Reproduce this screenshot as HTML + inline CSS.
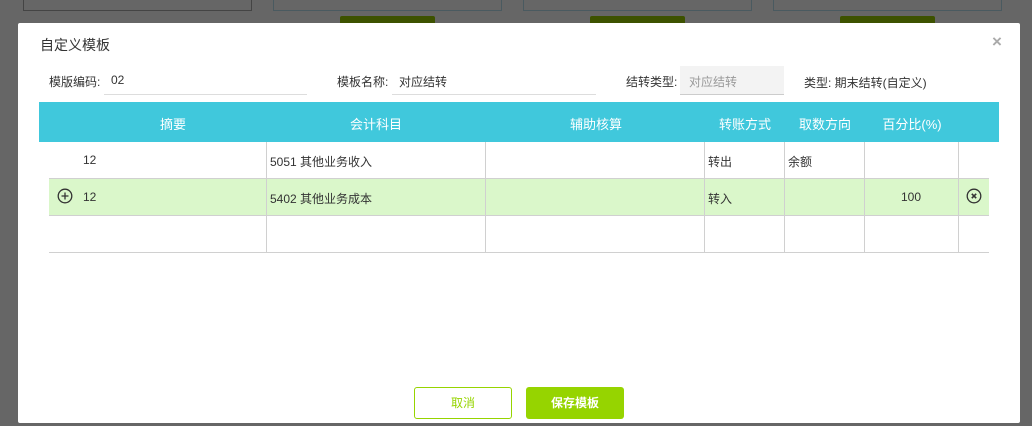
<!DOCTYPE html>
<html><head><meta charset="utf-8"><style>
*{margin:0;padding:0;box-sizing:border-box}
body{width:1032px;height:426px;background:#666;position:relative;overflow:hidden;font-family:"Liberation Sans","Noto Sans CJK SC",sans-serif;font-size:12px;color:#333}
.a{position:absolute}
.bg{border:1px solid #4a5a60;border-top:none;height:11px;top:0}
.gb{background:#3d5200;height:10px;top:16px;width:95px;border-radius:2px 2px 0 0}
.m{left:18px;top:23px;width:1002px;height:400px;background:#fff;border-radius:2px}
.hd{left:39px;top:102px;width:960px;height:40px;background:#40c8dc;color:#fff;font-size:13px}
.hd span{position:absolute;top:12px;transform:translateX(-50%);white-space:nowrap}
.hl{height:1px;background:#d0d0d0;left:49px;width:940px}
.vl{width:1px;background:#d0d0d0;top:142px;height:111px}
.t{white-space:nowrap}
.inp{height:1px;background:#ddd}
</style></head><body>
<div class="a bg" style="left:23px;width:229px;border-color:#444"></div>
<div class="a bg" style="left:273px;width:229px"></div>
<div class="a bg" style="left:523px;width:229px"></div>
<div class="a bg" style="left:773px;width:229px"></div>
<div class="a gb" style="left:340px"></div>
<div class="a gb" style="left:590px"></div>
<div class="a gb" style="left:840px"></div>
<div class="a m"></div>
<div class="a t" style="left:40px;top:35px;font-size:14px;color:#333">自定义模板</div>
<div class="a t" style="left:992px;top:32px;font-size:17px;color:#aaa;font-weight:bold">×</div>
<div class="a t" style="left:49px;top:73px">模版编码:</div>
<div class="a t" style="left:111px;top:73px">02</div>
<div class="a inp" style="left:104px;top:94px;width:203px"></div>
<div class="a t" style="left:337px;top:73px">模板名称:</div>
<div class="a t" style="left:399px;top:73px">对应结转</div>
<div class="a inp" style="left:392px;top:94px;width:204px"></div>
<div class="a t" style="left:626px;top:73px">结转类型:</div>
<div class="a" style="left:680px;top:66px;width:104px;height:29px;background:#f3f3f3;border-bottom:1px solid #ccc"></div>
<div class="a t" style="left:689px;top:73px;color:#999">对应结转</div>
<div class="a t" style="left:804px;top:74px">类型: 期末结转(自定义)</div>
<div class="a hd"><span style="left:134px">摘要</span><span style="left:337px">会计科目</span><span style="left:557px">辅助核算</span><span style="left:706px">转账方式</span><span style="left:786px">取数方向</span><span style="left:873px">百分比(%)</span></div>
<div class="a" style="left:49px;top:179px;width:940px;height:37px;background:#daf7ca"></div>
<div class="a hl" style="top:178px"></div>
<div class="a hl" style="top:215px"></div>
<div class="a hl" style="top:252px"></div>
<div class="a vl" style="left:266px"></div>
<div class="a vl" style="left:485px"></div>
<div class="a vl" style="left:704px"></div>
<div class="a vl" style="left:784px"></div>
<div class="a vl" style="left:864px"></div>
<div class="a vl" style="left:958px"></div>
<div class="a t" style="left:83px;top:153px">12</div>
<div class="a t" style="left:270px;top:153px">5051 其他业务收入</div>
<div class="a t" style="left:708px;top:153px">转出</div>
<div class="a t" style="left:788px;top:153px">余额</div>
<svg class="a" style="left:57px;top:188px" width="16" height="16" viewBox="0 0 16 16"><circle cx="8" cy="8" r="6.8" fill="none" stroke="#333" stroke-width="1.3"/><path d="M8 4.5v7M4.5 8h7" stroke="#333" stroke-width="1.3"/></svg>
<div class="a t" style="left:83px;top:190px">12</div>
<div class="a t" style="left:270px;top:190px">5402 其他业务成本</div>
<div class="a t" style="left:708px;top:190px">转入</div>
<div class="a t" style="left:901px;top:190px">100</div>
<svg class="a" style="left:966px;top:188px" width="16" height="16" viewBox="0 0 16 16"><circle cx="8" cy="8" r="6.8" fill="none" stroke="#333" stroke-width="1.3"/><path d="M5.8 5.8l4.4 4.4M10.2 5.8l-4.4 4.4" stroke="#333" stroke-width="1.6"/></svg>
<div class="a" style="left:414px;top:387px;width:98px;height:32px;border:1px solid #96d400;border-radius:3px;color:#96d400;text-align:center;line-height:30px">取消</div>
<div class="a" style="left:526px;top:387px;width:98px;height:32px;background:#96d400;border-radius:3px;color:#fff;text-align:center;line-height:32px;font-weight:bold">保存模板</div>
</body></html>
